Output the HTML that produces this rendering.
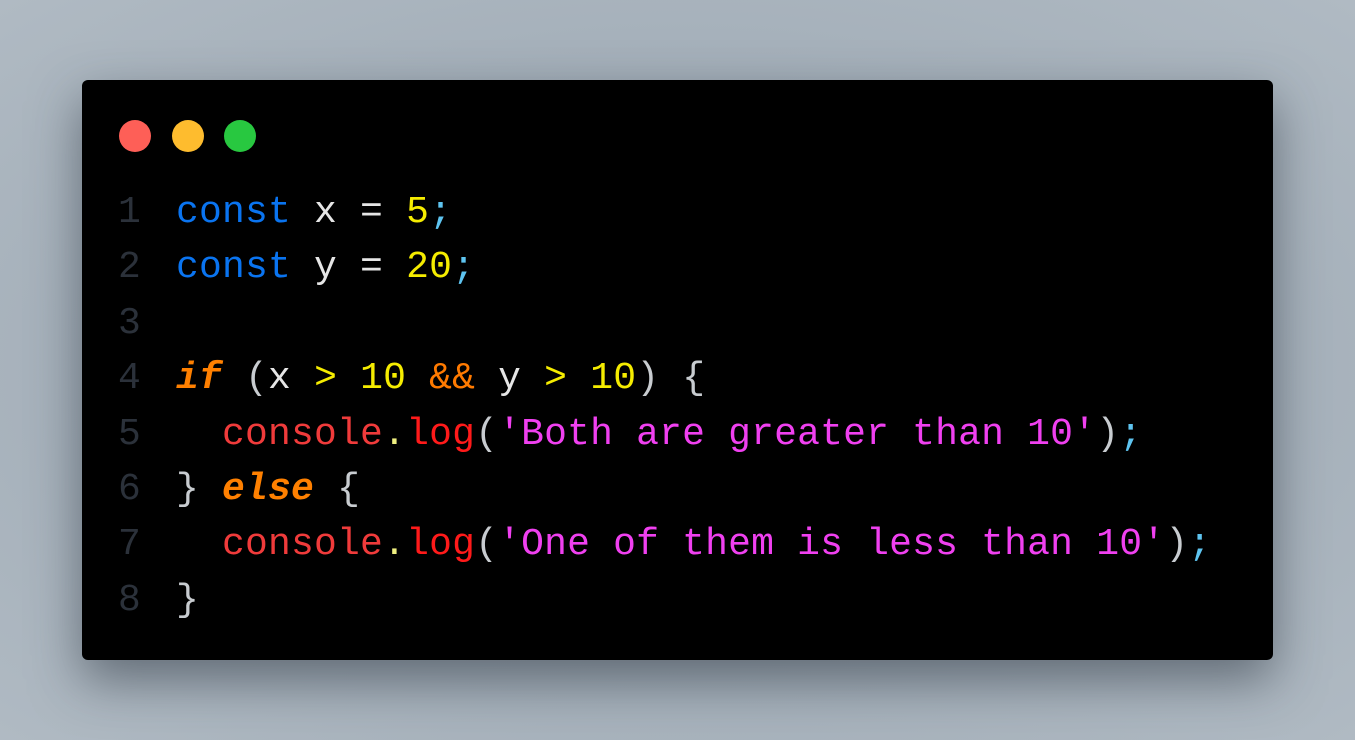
<!DOCTYPE html>
<html><head><style>
html,body{margin:0;padding:0;}
body{width:1355px;height:740px;overflow:hidden;background:radial-gradient(ellipse at 50% 50%,#8e99a4 0%,#a5b0ba 60%,#b0bac3 100%);position:relative;font-family:"Liberation Mono",monospace;}
.card{position:absolute;left:82px;top:80px;width:1191px;height:580px;background:#000;border-radius:6px;box-shadow:0 20px 50px rgba(40,50,60,.55);}
.dot{position:absolute;top:120px;width:32px;height:32px;border-radius:50%;}
.ln,.tx{position:absolute;top:185px;font-size:38px;line-height:55.4px;white-space:pre;margin:0;letter-spacing:0.2px;}
.ln{left:118px;color:#2b313a;}
.tx{left:176px;color:#e6e6e6;}
.b{color:#0a74f0}.y{color:#f5ec00}.c{color:#5ec4f0}.o{color:#ff8000;font-style:italic;font-weight:bold}.oa{color:#ff7a00}
.r{color:#f03b3b}.rr{color:#ff1a1a}.p{color:#f040f0}.g{color:#c8ccd0}.dt{color:#f0f080}
</style></head><body>
<div class="card"></div>
<div class="dot" style="left:119px;background:#fe5f57"></div>
<div class="dot" style="left:172px;background:#febc2e"></div>
<div class="dot" style="left:224px;background:#28c840"></div>
<div class="ln">1
2
3
4
5
6
7
8</div>
<div class="tx"><span class="b">const</span> x = <span class="y">5</span><span class="c">;</span>
<span class="b">const</span> y = <span class="y">20</span><span class="c">;</span>

<span class="o">if</span> <span class="g">(</span>x <span class="y">&gt;</span> <span class="y">10</span> <span class="oa">&amp;&amp;</span> y <span class="y">&gt;</span> <span class="y">10</span><span class="g">) {</span>
  <span class="r">console</span><span class="dt">.</span><span class="rr">log</span><span class="g">(</span><span class="p">'Both are greater than 10'</span><span class="g">)</span><span class="c">;</span>
<span class="g">}</span> <span class="o">else</span> <span class="g">{</span>
  <span class="r">console</span><span class="dt">.</span><span class="rr">log</span><span class="g">(</span><span class="p">'One of them is less than 10'</span><span class="g">)</span><span class="c">;</span>
<span class="g">}</span></div>
</body></html>
